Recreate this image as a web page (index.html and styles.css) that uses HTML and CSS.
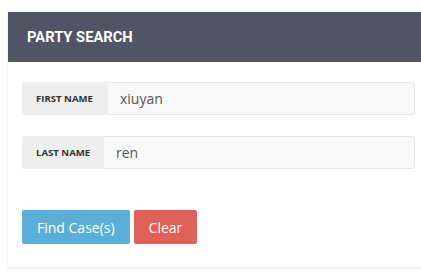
FILE: index.html
```html
<!DOCTYPE html>
<html lang="en">
<head>
    <meta charset="UTF-8">
    <meta name="viewport" content="width=device-width, initial-scale=1.0">
    <title>Party Search</title>
    <link rel="stylesheet" href="styles.css">
</head>
<body>
    <div class="panel">
        <div class="panel-heading">PARTY SEARCH</div>
        <form class="panel-body">
            <div class="input-group">
                <span class="addon addon-first">FIRST NAME</span>
                <input type="text" class="field" value="xiuyan">
            </div>
            <div class="input-group">
                <span class="addon">LAST NAME</span>
                <input type="text" class="field" value="ren">
            </div>
            <div class="actions">
                <button type="submit" class="btn btn-find">Find Case(s)</button>
                <button type="reset" class="btn btn-clear">Clear</button>
            </div>
        </form>
    </div>
</body>
</html>
```

FILE: styles.css
```css
body {
    margin: 0;
    padding: 12px 0 0 7px;
    overflow: hidden;
    background-color: #fff;
    font-family: "Open Sans", sans-serif;
}
.panel {
    width: 422px;
    background-color: #fff;
    border-bottom: 2px solid #eeeeee;
    border-left: 1px solid #f6f6f6;
}
.panel-heading {
    background-color: #4f5565;
    color: #fff;
    font-family: Roboto, sans-serif;
    font-weight: bold;
    font-size: 14.7px;
    height: 50px;
    line-height: 50px;
    padding-left: 19px;
}
.panel-body {
    padding: 20px 15px 23px 14px;
}
.input-group {
    display: flex;
    height: 33px;
    margin-bottom: 21px;
}
.addon {
    display: flex;
    align-items: center;
    box-sizing: border-box;
    width: 82px;
    padding-left: 14px;
    background-color: #eeeeee;
    border-radius: 3px 0 0 3px;
    color: #333;
    font-size: 9.6px;
    font-weight: bold;
}
.addon-first {
    width: 86px;
}
.field {
    flex: 1;
    box-sizing: border-box;
    height: 33px;
    margin: 0;
    padding: 0 12px;
    border: 1px solid #e6e6e6;
    border-left: none;
    border-radius: 0 3px 3px 0;
    background-color: #f9f9f9;
    color: #555;
    font-family: "Open Sans", sans-serif;
    font-size: 14px;
}
.actions {
    display: flex;
    gap: 4px;
    padding-top: 20px;
}
.btn {
    height: 34px;
    padding: 0 15px;
    border: none;
    border-radius: 2px;
    color: #fff;
    font-family: "Open Sans", sans-serif;
    font-size: 14px;
}
.btn-find {
    background-color: #5baed8;
}
.btn-clear {
    background-color: #e0605a;
}
```
